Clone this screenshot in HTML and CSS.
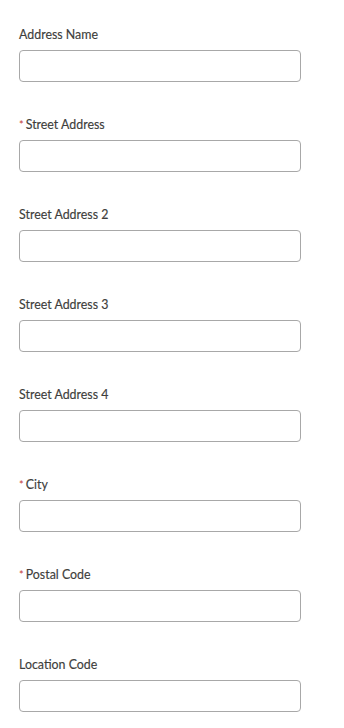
FILE: index.html
```html
<!DOCTYPE html>
<html>
<head>
<meta charset="utf-8">
<link rel="stylesheet" href="styles.css">
</head>
<body>
<form class="form">
  <div class="field"><label class="label">Address Name</label><div class="input"></div></div>
  <div class="field"><label class="label"><abbr class="req">*</abbr>Street Address</label><div class="input"></div></div>
  <div class="field"><label class="label">Street Address 2</label><div class="input"></div></div>
  <div class="field"><label class="label">Street Address 3</label><div class="input"></div></div>
  <div class="field"><label class="label">Street Address 4</label><div class="input"></div></div>
  <div class="field"><label class="label"><abbr class="req">*</abbr>City</label><div class="input"></div></div>
  <div class="field"><label class="label"><abbr class="req">*</abbr>Postal Code</label><div class="input"></div></div>
  <div class="field"><label class="label">Location Code</label><div class="input"></div></div>
</form>
</body>
</html>
```
FILE: styles.css
```css
html, body {
  margin: 0;
  padding: 0;
  background: #ffffff;
}
body {
  font-family: Lato, "Open Sans", "Liberation Sans", sans-serif;
  color: #3e3e3c;
}
.form {
  display: flex;
  flex-direction: column;
  gap: 36px;
  padding: 28px 0 0 19px;
  width: 282px;
}
.field {
  display: flex;
  flex-direction: column;
  gap: 8px;
}
.label {
  font-size: 12.4px;
  line-height: 14px;
  height: 14px;
  font-weight: 400;
  color: #3e3e3c;
  -webkit-text-stroke: 0.15px #3e3e3c;
}
.req {
  color: #c23934;
  -webkit-text-stroke: 0;
  text-decoration: none;
  font-weight: 400;
  font-size: 11px;
  margin-right: 2px;
}
.input {
  height: 30px;
  border: 1px solid #a8a8a8;
  border-radius: 4px;
  background: #fff;
}
```
